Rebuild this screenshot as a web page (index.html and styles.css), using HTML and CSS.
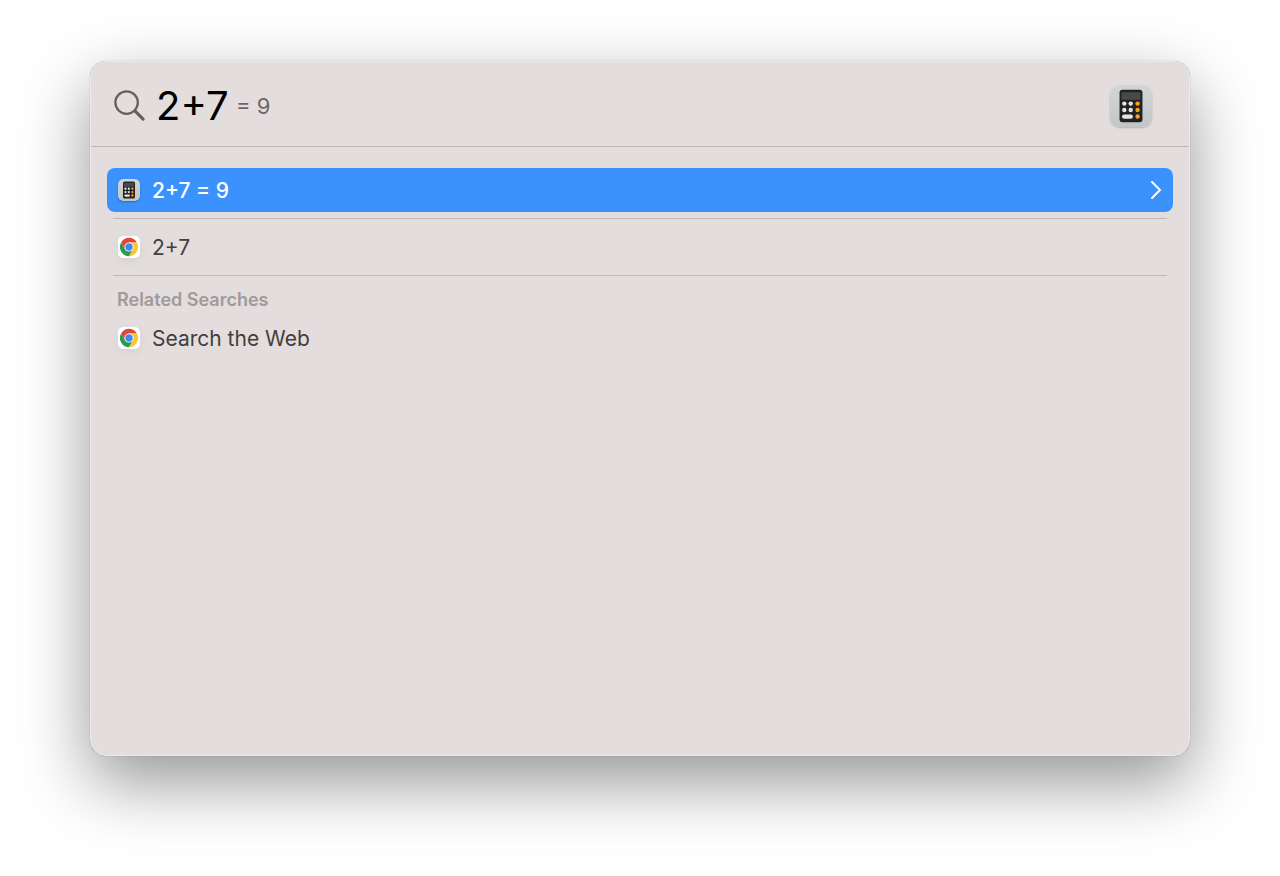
FILE: index.html
```html
<!DOCTYPE html>
<html lang="en">

<head>
    <meta charset="UTF-8">
    <meta name="viewport" content="width=device-width, initial-scale=1">
    <title>Spotlight</title>
    <link rel="stylesheet" href="styles.css">
</head>

<body>
<svg class="symbols" aria-hidden="true">
    <linearGradient id="case" x1="0" y1="0" x2="0" y2="1">
        <stop offset="0" stop-color="#d3d5d6" />
        <stop offset="1" stop-color="#c3c6c7" />
    </linearGradient>
    <symbol id="calculator" viewBox="0 0 44 44">
        <rect width="44" height="44" rx="10" fill="url(#case)" />
        <rect x="10" y="5" width="24" height="34" rx="3" fill="#222224" />
        <rect x="12" y="7.5" width="20" height="8" rx="1" fill="#49494b" />
        <g fill="#e4e4e4">
            <circle cx="15" cy="19.5" r="2.3" />
            <circle cx="21.7" cy="19.5" r="2.3" />
            <circle cx="15" cy="26.2" r="2.3" />
            <circle cx="21.7" cy="26.2" r="2.3" />
            <rect x="12.6" y="30.8" width="11.4" height="4.6" rx="2.2" />
        </g>
        <g fill="#f9a01b">
            <circle cx="28.9" cy="19.5" r="2.3" />
            <circle cx="28.9" cy="26.2" r="2.3" />
            <circle cx="28.9" cy="33" r="2.3" />
        </g>
    </symbol>
    <symbol id="chrome" viewBox="0 0 48 48">
        <rect width="48" height="48" rx="10" fill="#fff" />
        <path d="M6.68 14A20 20 0 0 1 41.32 14L24 14L15.34 29Z" fill="#e2453a" />
        <path d="M41.32 14A20 20 0 0 1 24 44L32.66 29L24 14Z" fill="#fbc82f" />
        <path d="M24 44A20 20 0 0 1 6.68 14L15.34 29L32.66 29Z" fill="#2a9c52" />
        <circle cx="24" cy="24" r="10" fill="#fff" />
        <circle cx="24" cy="24" r="8" fill="#4285f4" />
    </symbol>
</svg>

<main class="spotlight">
    <form class="search" role="search">
        <label class="search__label" for="query" aria-label="Search">
            <svg class="search__icon" viewBox="0 0 32 32" fill="none" stroke="#685e60" stroke-linecap="round">
                <circle cx="13" cy="13" r="11.6" stroke-width="2.3" />
                <path d="M21.6 21.6L30 30" stroke-width="3.2" />
            </svg>
        </label>
        <input class="search__input" type="text" id="query" value="2+7" autocomplete="off">
        <output class="search__answer" for="query">= 9</output>
        <svg class="search__app" aria-hidden="true"><use href="#calculator" /></svg>
    </form>

    <div class="results">
        <button class="result result--active" type="button">
            <svg class="result__icon result__icon--calc" aria-hidden="true"><use href="#calculator" /></svg>
            <span class="result__text">2+7 = 9</span>
            <svg class="result__arrow" viewBox="0 0 12 20" aria-hidden="true">
                <path d="M2 2L10 10L2 18" fill="none" stroke="#fff" stroke-width="2" stroke-linecap="round" stroke-linejoin="round" />
            </svg>
        </button>
        <hr class="divider">
        <button class="result" type="button">
            <svg class="result__icon" aria-hidden="true"><use href="#chrome" /></svg>
            <span class="result__text">2+7</span>
        </button>
        <hr class="divider">
        <h2 class="results__title">Related Searches</h2>
        <button class="result" type="button">
            <svg class="result__icon" aria-hidden="true"><use href="#chrome" /></svg>
            <span class="result__text">Search the Web</span>
        </button>
    </div>
</main>
</body>

</html>
```
FILE: styles.css
```css
* {
  box-sizing: border-box;
}

body {
  display: flex;
  min-height: 100vh;
  margin: 0;
  padding: 61px 90px 120px;
  font-family: Inter, "Liberation Sans", sans-serif;
  background-color: #FFFFFF;
}

.symbols {
  position: absolute;
  width: 0;
  height: 0;
}

.spotlight {
  flex: 1;
  border: 1px solid #EEEAEA;
  border-radius: 16px;
  background-color: #E3DDDD;
  box-shadow: 0 0 1px rgba(0, 0, 0, 0.4), 0 26px 68px rgba(0, 0, 0, 0.42);
}

.search {
  display: flex;
  align-items: center;
  height: 85px;
  padding: 3px 37px 0 23px;
  border-bottom: 1px solid #BDB7B8;
}

.search__label {
  display: flex;
}

.search__icon {
  width: 31px;
  height: 31px;
}

.search__input {
  width: 80px;
  height: 56px;
  margin-left: 11px;
  padding: 0;
  border: none;
  outline: none;
  background: none;
  color: #000000;
  font-family: inherit;
  font-size: 40px;
}

.search__answer {
  color: #6F6567;
  font-size: 22px;
}

.search__app {
  width: 42px;
  height: 42px;
  margin-left: auto;
  border-radius: 10px;
  box-shadow: 0 1px 2px rgba(0, 0, 0, 0.2);
}

.results {
  padding: 21px 16px;
}

.result {
  display: flex;
  align-items: center;
  width: 100%;
  height: 44px;
  padding: 0 11px;
  border: none;
  border-radius: 8px;
  background: none;
  color: #443D3E;
  font-family: inherit;
  font-size: 21px;
  text-align: left;
}

.result--active {
  background-color: #3B92FC;
  color: #FFFFFF;
  font-weight: 500;
}

.result__icon {
  width: 22px;
  height: 22px;
  margin-right: 12px;
  border-radius: 5px;
  box-shadow: 0 4px 12px rgba(0, 0, 0, 0.05);
}

.result__icon--calc {
  box-shadow: 0 1px 2px rgba(0, 0, 0, 0.3);
}

.result__arrow {
  width: 12px;
  height: 20px;
  margin-left: auto;
}

.divider {
  height: 1px;
  margin: 6px;
  border: none;
  background-color: #BEB8B9;
}

.results__title {
  margin: 0;
  padding: 6px 10px 4px;
  color: #A19A9B;
  font-weight: 600;
  font-size: 18px;
  line-height: 24px;
}
```
